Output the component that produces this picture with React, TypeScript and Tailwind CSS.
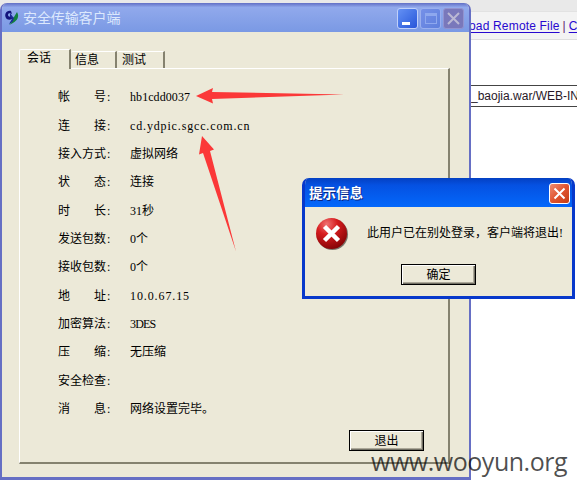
import type { ReactNode } from "react";

const rows: { label: string[]; value: string; track: string }[] = [
  { label: ["帐", "号"], value: "hb1cdd0037", track: "tracking-[0.07px]" },
  { label: ["连", "接"], value: "cd.ydpic.sgcc.com.cn", track: "tracking-[0.85px]" },
  { label: ["接", "入", "方", "式"], value: "虚拟网络", track: "" },
  { label: ["状", "态"], value: "连接", track: "" },
  { label: ["时", "长"], value: "31秒", track: "" },
  { label: ["发", "送", "包", "数"], value: "0个", track: "" },
  { label: ["接", "收", "包", "数"], value: "0个", track: "" },
  { label: ["地", "址"], value: "10.0.67.15", track: "tracking-[0.9px]" },
  { label: ["加", "密", "算", "法"], value: "3DES", track: "tracking-[-0.8px]" },
  { label: ["压", "缩"], value: "无压缩", track: "" },
  { label: ["安", "全", "检", "查"], value: "", track: "" },
  { label: ["消", "息"], value: "网络设置完毕。", track: "" },
];

function PushButton({ children }: { children: ReactNode }) {
  return (
    <button className="flex h-[21px] w-[75px] items-center justify-center border border-black bg-[#ece9d8] text-xs leading-none shadow-[inset_1px_1px_0_#fff,inset_-1px_-1px_0_#716f64,inset_-2px_-2px_0_#aca899]">
      {children}
    </button>
  );
}

function Tab({ children, className }: { children: string; className: string }) {
  return (
    <div className={`rounded-tl-[2px] border-t border-r-2 border-t-white border-r-[#85826f] bg-[#ece9d8] text-xs leading-none ${className}`}>
      {children}
    </div>
  );
}

function BackgroundPage() {
  return (
    <div className="flex h-full flex-col bg-white font-['Liberation_Sans',sans-serif] text-[12px] text-black">
      <div className="h-[12px] shrink-0 border-b border-[#e2e2e2] bg-[#e9e9e9]" />
      <div className="flex h-[28px] shrink-0 items-center border-b border-[#dedede] bg-[#f3f3f3] pt-[1px] pl-[469px] whitespace-nowrap">
        <a className="tracking-[0.17px] text-[#2708d0] underline underline-offset-2">oad Remote File</a>
        <span className="px-[3px] text-[#63206b]">|</span>
        <a className="text-[#2708d0] underline underline-offset-2">C</a>
      </div>
      <div className="mt-[45px] flex h-[22px] shrink-0 items-center border-y border-[#444] pl-[471px] whitespace-nowrap text-[#281828]">
        _baojia.war/WEB-IN
      </div>
    </div>
  );
}

function ClientWindow() {
  return (
    <section className="absolute top-[3px] left-0 flex h-[477px] w-[471px] flex-col overflow-hidden rounded-t-[7px] border-x-2 border-b-[3px] border-[#666fc4] bg-[#ece9d8]">
      <header className="flex h-[29px] shrink-0 items-center bg-linear-to-b from-[#626fc5] via-[#91a9ec] via-15% to-[#7a99e4] pr-[5px] pl-[2px]">
        <svg className="h-[16px] w-[15px]" viewBox="0 0 15 16">
          <path d="M7 1C2 0 0 5 2 8c1 2 4 2 6 1V7C5 7 4 6 4 5c0-2 2-2 4-1Z" fill="#14147d" />
          <path d="m6 3 3 4 2 1-2 4-4 2 3-5-2-2Z" fill="#1b2997" />
          <path d="m10 7 3-5c3 5 0 10-8 13l4-4Z" fill="#12803f" />
        </svg>
        <h1 className="mt-[2px] ml-[4px] text-[14px] leading-none tracking-[-0.1px] text-[#dce8fd]">安全传输客户端</h1>
        <div className="mt-[1px] ml-auto flex gap-[2px]">
          <span className="flex h-[21px] w-[21px] items-end rounded-[3px] border border-[#c0d0fa] bg-linear-to-br from-[#6490f4] to-[#2855d9] pb-[3px] pl-[4px]">
            <i className="h-[3px] w-[8px] bg-white" />
          </span>
          <span className="flex h-[21px] w-[21px] items-center justify-center rounded-[3px] border border-[#9aafee] bg-linear-to-br from-[#7590e8] to-[#5e7fdc]">
            <i className="h-[11px] w-[12px] border border-t-[3px] border-[#8ea8ee]" />
          </span>
          <span className="flex h-[21px] w-[21px] items-center justify-center rounded-[3px] border border-[#9293cf] bg-[#7978bb]">
            <svg className="h-[13px] w-[13px]" viewBox="0 0 13 13">
              <path d="m1 1 11 11M12 1 1 12" stroke="#bbb9d4" strokeWidth="2" />
            </svg>
          </span>
        </div>
      </header>
      <div className="flex flex-1 flex-col pt-[17px] pr-[19px] pb-[13px] pl-[17px]">
        <nav className="flex h-[19px] shrink-0 items-end">
          <Tab className="relative z-10 -mb-px h-[20px] w-[52px] border-l border-l-white pt-[2px] pl-[7px]">会话</Tab>
          <Tab className="h-[17px] w-[46px] pt-[2px] pl-[4px]">信息</Tab>
          <Tab className="h-[17px] w-[48px] pt-[2px] pl-[5px]">测试</Tab>
        </nav>
        <div className="flex flex-1 flex-col border-t border-r-2 border-b-2 border-l border-t-white border-r-[#85826f] border-b-[#85826f] border-l-white pt-[14px] pr-[24px] pb-[11px] pl-[38px]">
          <dl className="text-xs leading-none">
            {rows.map((row) => (
              <div key={row.label.join("")} className="flex h-[28.36px] items-center">
                <dt className="flex w-[72px]">
                  <span className="flex w-[48px] justify-between">
                    {row.label.map((c, i) => (
                      <span key={i}>{c}</span>
                    ))}
                  </span>
                  <span className="pl-[1px]">:</span>
                </dt>
                <dd className={`font-['Liberation_Serif','Noto_Sans_CJK_SC',serif] whitespace-nowrap ${row.track}`}>{row.value}</dd>
              </div>
            ))}
          </dl>
          <div className="mt-auto flex justify-end">
            <PushButton>退出</PushButton>
          </div>
        </div>
      </div>
    </section>
  );
}

function Arrows() {
  return (
    <svg className="absolute top-[80px] left-[190px] h-[175px] w-[160px]" viewBox="190 80 160 175">
      <path d="m196 96 17-8-1 4 132 2.4-132 4.6 1 4.500Z" fill="#fb3838" />
      <path d="M202 136 214 149.500 210 151 236 251.500 203 153 199 154.500Z" fill="#fb3838" />
    </svg>
  );
}

function MessageDialog() {
  return (
    <section className="absolute top-[178px] left-[302px] flex h-[121px] w-[273px] flex-col overflow-hidden rounded-t-[7px] border-x-[3px] border-b-[3px] border-[#0738cb] bg-[#ece9d8]">
      <header className="flex h-[29px] shrink-0 items-center bg-linear-to-b from-[#0440c2] via-[#0551e2] via-25% to-[#0468fb] pr-[2px] pl-[4px]">
        <h2 className="mt-[2px] text-[13.5px] leading-none font-bold text-white [text-shadow:1px_1px_0_#0b2582]">提示信息</h2>
        <span className="mt-[1px] ml-auto flex h-[21px] w-[21px] items-center justify-center rounded-[3px] border border-white bg-linear-to-br from-[#ee8b70] via-[#e0542f] to-[#c43c13]">
          <svg className="h-[13px] w-[13px]" viewBox="0 0 13 13">
            <path d="m1.500 1.500 10 10m0-10-10 10" stroke="#fff" strokeWidth="2" />
          </svg>
        </span>
      </header>
      <div className="flex items-center pt-[10px] pl-[10px]">
        <svg className="h-[34px] w-[34px] shrink-0" viewBox="0 0 34 34">
          <defs>
            <radialGradient id="errorBall" cx=".35" cy=".2" r=".85">
              <stop offset="0" stopColor="#f07373" />
              <stop offset=".4" stopColor="#d61c1e" />
              <stop offset="1" stopColor="#820305" />
            </radialGradient>
          </defs>
          <circle cx="17.500" cy="17.500" r="15.500" fill="#79756b" />
          <circle cx="16.500" cy="16.500" r="15.500" fill="url(#errorBall)" />
          <path d="m9.500 9.500 14 14m0-14-14 14" stroke="#fff" strokeWidth="4.500" />
        </svg>
        <p className="-mt-[3px] ml-[18px] flex text-xs leading-none whitespace-nowrap">此用户已在别处登录，客户端将退出!</p>
      </div>
      <div className="mt-[13px] flex pl-[96px]">
        <PushButton>确定</PushButton>
      </div>
    </section>
  );
}

export default function App() {
  return (
    <main className="relative h-[489px] w-[577px] overflow-hidden bg-white font-['Liberation_Serif','Noto_Sans_CJK_SC',sans-serif] text-black">
      <BackgroundPage />
      <ClientWindow />
      <Arrows />
      <MessageDialog />
      <div className="absolute top-[444px] left-[371px] font-['Open_Sans',sans-serif] text-[25px] leading-[34px] tracking-[-0.47px] whitespace-nowrap text-black/70">
        www.wooyun.org
      </div>
    </main>
  );
}
